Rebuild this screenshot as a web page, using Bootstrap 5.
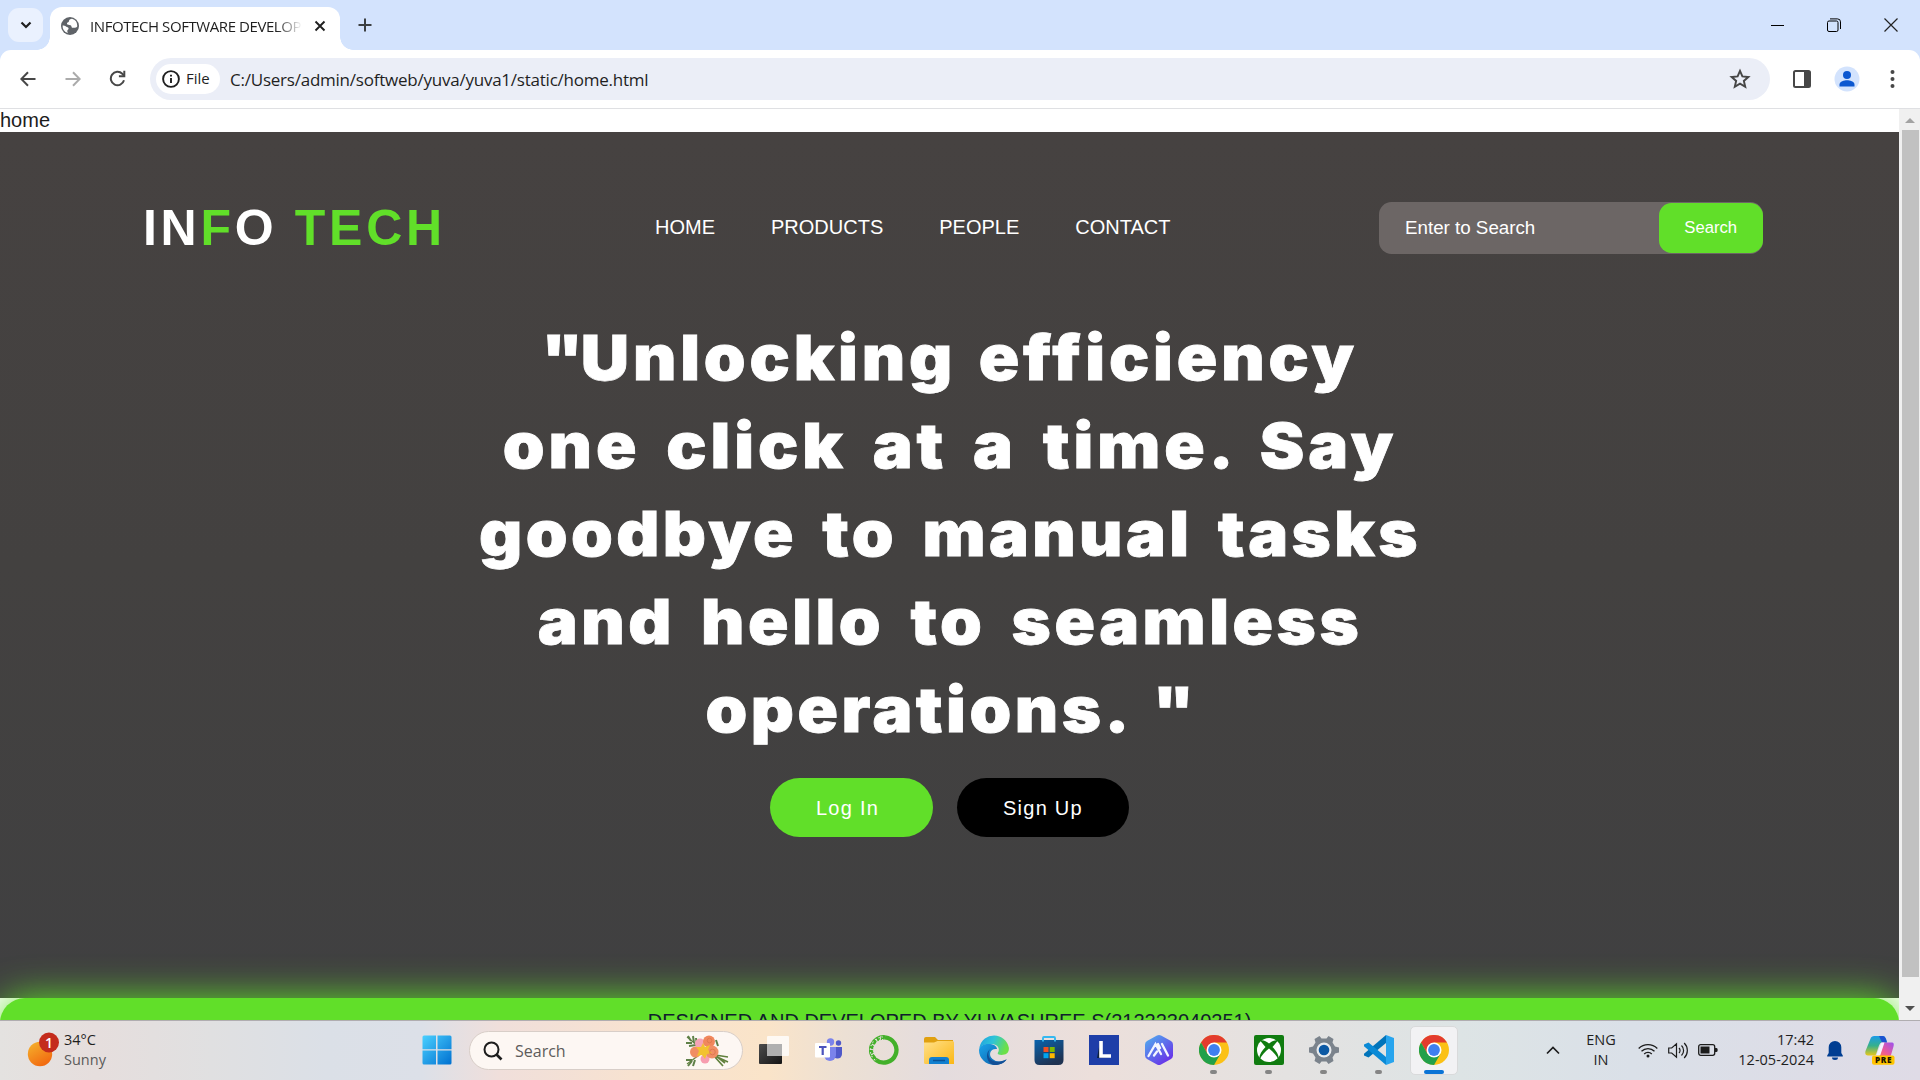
<!DOCTYPE html>
<html lang="en">
<head>
<meta charset="utf-8">
<meta name="viewport" content="width=device-width, initial-scale=1">
<title>INFOTECH SOFTWARE DEVELOPERS</title>
<link href="https://cdn.jsdelivr.net/npm/bootstrap@5.3.0/dist/css/bootstrap.min.css" rel="stylesheet">
<style>
body{width:1920px;height:1080px;overflow:hidden;font-family:"Open Sans","Noto Sans",sans-serif;color:#1f1f1f;background:#fff}
svg{display:block;flex:none}
.nowrap{white-space:nowrap}
/* browser chrome */
.tabstrip{height:50px;background:#d3e3fd;padding-left:8px}
.tab-search{width:35px;height:34px;border-radius:11px;background:#eaf1fe;margin-top:8px}
.tab-active{width:290px;height:43px;margin:7px 0 0 7px;background:#fff;border-radius:12px 12px 0 0;padding:0 14px 6px 11px;position:relative}
.tab-active::before,.tab-active::after{content:"";position:absolute;bottom:0;width:13px;height:13px}
.tab-active::before{left:-13px;background:radial-gradient(circle at 0 0,transparent 12.5px,#fff 13px)}
.tab-active::after{right:-13px;background:radial-gradient(circle at 100% 0,transparent 12.5px,#fff 13px)}
.tab-title{width:212px;margin-left:11px;font-size:15px;line-height:20px;letter-spacing:-.42px;overflow:hidden;-webkit-mask-image:linear-gradient(90deg,#000 88%,transparent);mask-image:linear-gradient(90deg,#000 88%,transparent)}
.plus{margin:18px 0 0 18px}
.winctls{margin-right:1px}
.winctl{width:57px;height:50px}
.toolbar-wrap{height:59px;background:#d3e3fd}
.toolbar{height:59px;background:#fff;border-radius:11px 11px 0 0;border-bottom:1px solid #dfe0e3;padding:0 0 1px 5px}
.tool{width:45px;height:45px}
.omnibox{width:1620px;height:42px;border-radius:21px;background:#ebeef7;padding:0 19px 0 6px;margin-left:10px}
.chip{width:64px;height:30px;border-radius:15px;background:#fff;padding-left:6px;gap:6px;font-size:15px}
.url{font-size:17px;margin-left:10px;letter-spacing:-.23px;padding-top:2px}
.ico-panel,.ico-user{margin-left:23px}.ico-dots{margin-left:29px}
/* page */
.viewport{height:911px;overflow:hidden}
.site{width:1899px;height:911px;overflow:hidden;font-family:"Liberation Sans",Arial,sans-serif;background:#fff}
.site-label{height:23px;font-size:20px;line-height:23px;color:#1c1c1c}
.hero{height:866px;background:linear-gradient(#464241,#434140 50%,#404041);padding-top:70px}
.hero-nav{height:52px;padding-left:143px}
.brand{width:512px;font-size:50px;font-weight:700;letter-spacing:3.7px;line-height:50px;color:#fff}
.brand span{color:#61df29}
.links{gap:56px;width:724px;font-size:20px;color:#fff;padding-bottom:3px}
.searchbox{width:383.5px;height:52px;border-radius:12.5px;background:#6c6665;padding:1px 0}
.searchbox .hint{font-size:18.75px;color:#fff;padding-left:26px;width:280px}
.searchbox .go{width:103.5px;height:50px;border-radius:12.5px;background:#61df29;border:0;color:#fff;font-size:16.67px;padding:0 0 2px}
.quote{padding-top:59px;color:#fff;font-family:Inter,"Liberation Sans",sans-serif;font-weight:900;font-size:62.5px;line-height:88px;margin:0;letter-spacing:3.3px;-webkit-text-stroke:.8px #fff}
.quote div{white-space:nowrap;transform:scaleX(1.07);padding-left:1px}
.quote .ws-1{word-spacing:5px;letter-spacing:3.6px;padding-left:0}
.ws-1 span{letter-spacing:-2px}
.ws-2{word-spacing:8px;letter-spacing:3.7px}
.ws-3{word-spacing:8px;letter-spacing:3.2px}
.ws-4{word-spacing:8.8px}
.quote .ws-5{word-spacing:6px;padding-left:4px}
.cta{gap:24.5px;margin-top:25px;padding-right:.5px}
.pill{height:59px;border-radius:30px;border:0;padding:0 0 0 46px;text-align:left;color:#fff;font-size:20px;letter-spacing:1.25px}
.pill-in{width:162.5px;background:#61df29}.pill-up{width:171.5px;background:#000}
.site-foot{height:60px;background:#61df29;border-radius:25px 25px 0 0;box-shadow:0 0 37px #61df29;font-size:20px;line-height:20px;padding-top:13px;color:#10202c;position:relative}
.scroller{width:21px;background:#f0f0f0;padding:0 1px 0 2px}
.thumb{width:17px;height:847px;background:#c1c1c1}
/* taskbar */
.taskbar{height:60px;border-top:1px solid #b0adb0;background:linear-gradient(90deg,#e4e2e0 0,#e6dedd 5%,#e0e0e1 11%,#dbe0e7 17%,#dce0e8 22%,#f0dfdb 26%,#f7e2d0 33%,#fae4c9 40%,#ece0d4 44%,#e4dcde 49%,#ecdfdb 57%,#e4e2e1 67%,#dde4e5 76%,#dae0e8 85%,#dfdbe6 100%);font-size:14.5px;line-height:20px;padding-bottom:1px}
.weather{width:409px;padding-left:27px;gap:5px}
.muted-txt{color:#5b5a5a}
.tb-search{width:274px;height:39px;border-radius:20px;background:#fdf7f3;border:1px solid #d8cec8;margin:1px 3px 0 5px;padding:0 11px 0 13px;color:#5e5c5b;font-size:16px}
.tb-search span{margin-left:12px}
.app{width:55px;height:58px;position:relative}
.app.run::after{content:"";position:absolute;left:24px;bottom:5px;width:7px;height:4px;border-radius:2px;background:#858585}
.app.on::before{content:"";position:absolute;left:4px;top:5px;width:48px;height:49px;border-radius:5px;background:#f2f2f4;border:1px solid #d9dadb}
.app.on svg{position:relative}
.app.on::after{left:18px;width:20px;background:#0a74d6}
.tray-up{width:40px;margin-left:72px}.tray-lang{width:56px}.tray-i{width:30px}
.tray-time{width:91px}
.tray-bell{width:40px;padding-left:2px}.tray-pre{width:52px}
</style>
<script src="https://cdn.jsdelivr.net/npm/bootstrap@5.3.0/dist/js/bootstrap.bundle.min.js"></script>
</head>
<body>
<svg width="0" height="0" class="position-absolute">
  <defs>
    <linearGradient id="gWin" x1="0" y1="0" x2="1" y2="1"><stop offset="0" stop-color="#4ad0ff"/><stop offset="1" stop-color="#0070d0"/></linearGradient>
    <linearGradient id="gSun" x1="0" y1="0" x2=".6" y2="1"><stop offset="0" stop-color="#f5b52e"/><stop offset="1" stop-color="#f26a10"/></linearGradient>
    <linearGradient id="gFold" x1="0" y1="0" x2="1" y2="1"><stop offset="0" stop-color="#ffe08a"/><stop offset="1" stop-color="#fbb715"/></linearGradient>
    <linearGradient id="gEdge" x1="0" y1="0" x2="1" y2=".3"><stop offset="0" stop-color="#1f9fe0"/><stop offset=".5" stop-color="#2fc4d8"/><stop offset="1" stop-color="#6be048"/></linearGradient>
    <linearGradient id="gEdge2" x1="0" y1="0" x2="1" y2="1"><stop offset="0" stop-color="#1aa4ea"/><stop offset="1" stop-color="#0c59a4"/></linearGradient>
    <linearGradient id="gStore" x1="0" y1="0" x2=".5" y2="1"><stop offset="0" stop-color="#0a63ad"/><stop offset="1" stop-color="#1f3251"/></linearGradient>
    <linearGradient id="gHex" x1="0" y1="0" x2=".8" y2="1"><stop offset="0" stop-color="#4fb4ee"/><stop offset="1" stop-color="#6a2be8"/></linearGradient>
    <linearGradient id="gDark" x1="0" y1="0" x2="1" y2="1"><stop offset="0" stop-color="#4c4c4c"/><stop offset="1" stop-color="#151515"/></linearGradient>
    <linearGradient id="gCopA" x1="0" y1="0" x2="0" y2="1"><stop offset="0" stop-color="#1b9be8"/><stop offset=".5" stop-color="#36b08c"/><stop offset="1" stop-color="#e8c81a"/></linearGradient>
    <linearGradient id="gCopB" x1="1" y1="0" x2="0" y2="1"><stop offset="0" stop-color="#9a52f0"/><stop offset=".6" stop-color="#ef5a94"/><stop offset="1" stop-color="#f77e50"/></linearGradient>
    <symbol id="chrome" viewBox="0 0 30 30">
      <circle cx="15" cy="15" r="15" fill="#fbc116"/>
      <path d="M2 7.500A15 15 0 0 1 28 7.500H15L8.500 18.800z" fill="#e33b2e"/>
      <path d="M2 7.500A15 15 0 0 0 15 30l6.500-11.300L15 22l-6.500-3.300z" fill="#22a04a"/>
      <circle cx="15" cy="15" r="7.500" fill="#fff"/><circle cx="15" cy="15" r="5.900" fill="#3f7ff0"/>
    </symbol>
  </defs>
</svg>
<header>
  <div class="tabstrip d-flex">
    <div class="tab-search d-flex align-items-center justify-content-center"><svg width="12" height="12" viewBox="0 0 12 12"><path d="M1.500 3.500 6 8l4.500-4.500" fill="none" stroke="#1f1f1f" stroke-width="2.200"/></svg></div>
    <div class="tab-active d-flex align-items-center">
      <svg width="18" height="18" viewBox="0 0 18 18"><circle cx="9" cy="9" r="9" fill="#5f6368"/><path d="M11 1.800c-1.500.2-3 .9-3 2.200 0 1.500-1.500 1-2 2.300-.4 1.300 1 1.700 2.400 1.700 1.600 0 2 1 2.200 1.900.3 1.300 2 .8 3.500.8 1 0 2.100-.6 2.200-1.700A7.500 7.500 0 0 0 11 1.800zM1.600 8.600c1.200 0 2.600.3 3.400 1 .9.800 2.600.6 2.600 1.900 0 1.200-1.300 1.400-1.300 2.500 0 .9.700 1.700.6 2.100A7.400 7.400 0 0 1 1.600 8.600z" fill="#fff"/></svg>
      <div class="tab-title nowrap">INFOTECH SOFTWARE DEVELOP</div>
      <svg class="ms-auto" width="12" height="12" viewBox="0 0 12 12"><path d="M1.500 1.500l9 9m0-9l-9 9" stroke="#1f1f1f" stroke-width="1.900"/></svg>
    </div>
    <svg class="plus" width="14" height="14" viewBox="0 0 14 14"><path d="M7 .5v13M.5 7h13" stroke="#3c4043" stroke-width="2"/></svg>
    <div class="winctls d-flex ms-auto">
      <div class="winctl d-flex align-items-center justify-content-center"><svg width="14" height="13" viewBox="0 0 14 13"><path d="M1 6.500h13" stroke="#000"/></svg></div>
      <div class="winctl d-flex align-items-center justify-content-center"><svg width="14" height="14" viewBox="0 0 14 14" fill="none" stroke="#000"><rect x=".5" y="3" width="10.500" height="10.500" rx="1.500"/><path d="M3 .9h7.500a3 3 0 0 1 3 3V11"/></svg></div>
      <div class="winctl d-flex align-items-center justify-content-center"><svg width="14" height="14" viewBox="0 0 14 14"><path d="M.5.5l13 13m0-13l-13 13" stroke="#222" stroke-width="1.200"/></svg></div>
    </div>
  </div>
  <div class="toolbar-wrap">
  <div class="toolbar d-flex align-items-center">
    <div class="tool d-flex align-items-center justify-content-center"><svg width="16" height="16" viewBox="0 0 16 16" fill="none" stroke="#474747" stroke-width="2"><path d="M15.500 8H2M8 1.300 1.300 8 8 14.700"/></svg></div>
    <div class="tool d-flex align-items-center justify-content-center"><svg width="16" height="16" viewBox="0 0 16 16" fill="none" stroke="#ababab" stroke-width="2"><path d="M.5 8H14M8 1.300 14.700 8 8 14.700"/></svg></div>
    <div class="tool d-flex align-items-center justify-content-center"><svg width="17" height="17" viewBox="0 0 17 17"><path d="M15 10.300A6.700 6.700 0 1 1 13.300 3.800L15 5.600" fill="none" stroke="#474747" stroke-width="2"/><path d="M16.300.8v6.400H9.900V5.200h4.400V.8z" fill="#474747"/></svg></div>
    <div class="omnibox d-flex align-items-center">
      <div class="chip d-flex align-items-center"><svg width="18" height="18" viewBox="0 0 18 18"><circle cx="9" cy="9" r="7.900" fill="none" stroke="#1f1f1f" stroke-width="1.900"/><path d="M9 8v5M9 4.700v1.900" stroke="#1f1f1f" stroke-width="1.900"/></svg><span>File</span></div>
      <div class="url nowrap">C:/Users/admin/softweb/yuva/yuva1/static/home.html</div>
      <svg class="ms-auto" width="22" height="22" viewBox="0 0 24 24"><path d="M12 3.200l2.600 6 6.500.6-4.900 4.300 1.500 6.400-5.700-3.400-5.700 3.400 1.500-6.400L2.900 9.800l6.500-.6z" fill="none" stroke="#474747" stroke-width="2.100"/></svg>
    </div>
    <svg class="ico-panel" width="18" height="18" viewBox="0 0 18 18"><rect x="1" y="1" width="16" height="16" rx="1.500" fill="none" stroke="#474747" stroke-width="2"/><path d="M11 1h6v16h-6z" fill="#474747"/></svg>
    <svg class="ico-user" width="26" height="26" viewBox="0 0 26 26"><circle cx="13" cy="13" r="12.500" fill="#d3e3fd"/><circle cx="13" cy="9" r="4" fill="#0b57d0"/><path d="M5.500 20.500v-2c0-3 4.800-4.300 7.500-4.300s7.500 1.300 7.500 4.300v2z" fill="#0b57d0"/></svg>
    <svg class="ico-dots" width="6" height="20" viewBox="0 0 6 20" fill="#474747"><circle cx="3.500" cy="3" r="2"/><circle cx="3.500" cy="10" r="2"/><circle cx="3.500" cy="17" r="2"/></svg>
  </div>
  </div>
</header>
<div class="viewport d-flex">
  <main class="site">
    <div class="site-label">home</div>
    <section class="hero">
      <nav class="hero-nav d-flex align-items-center">
        <div class="brand nowrap">IN<span>F</span>O <span>TECH</span></div>
        <div class="links d-flex"><span>HOME</span><span>PRODUCTS</span><span>PEOPLE</span><span>CONTACT</span></div>
        <div class="searchbox d-flex align-items-center"><div class="hint nowrap">Enter to Search</div><button class="go">Search</button></div>
      </nav>
      <h1 class="quote text-center">
        <div class="ws-1"><span>"</span>Unlocking efficiency</div>
        <div class="ws-2">one click at a time. Say</div>
        <div class="ws-3">goodbye to manual tasks</div>
        <div class="ws-4">and hello to seamless</div>
        <div class="ws-5">operations. "</div>
      </h1>
      <div class="cta d-flex justify-content-center"><button class="pill pill-in">Log In</button><button class="pill pill-up">Sign Up</button></div>
    </section>
    <footer class="site-foot text-center">DESIGNED AND DEVELOPED BY YUVASHREE S(212223040251)</footer>
  </main>
  <aside class="scroller d-flex flex-column align-items-center">
    <svg width="18" height="21" viewBox="0 0 18 21"><path d="M4 14l5-5 5 5z" fill="#a3a3a3"/></svg>
    <div class="thumb"></div>
    <svg class="mt-auto" width="18" height="21" viewBox="0 0 18 21"><path d="M4 7l5 5 5-5z" fill="#505050"/></svg>
  </aside>
</div>
<footer class="taskbar d-flex align-items-center">
  <div class="weather d-flex align-items-center">
    <svg width="32" height="36" viewBox="0 0 32 36"><circle cx="13" cy="22" r="12.200" fill="url(#gSun)"/><circle cx="22" cy="10.500" r="10" fill="#c42b1c"/><text x="22" y="15.500" font-size="14" font-weight="600" fill="#fff" text-anchor="middle">1</text></svg>
    <div><div>34°C</div><div class="muted-txt">Sunny</div></div>
  </div>
  <div class="app d-flex align-items-center justify-content-center"><svg width="30" height="30" viewBox="0 0 30 30" fill="url(#gWin)"><path d="M2 .5h12v13.700H.5V2Q.5.500 2 .5zM15.500.5H28q1.500 0 1.500 1.500v12.200h-14zM.5 15.500H14v14H2Q.5 29.500.5 28zM15.500 15.500h14V28q0 1.500-1.500 1.500H15.500z"/></svg></div>
  <div class="tb-search d-flex align-items-center">
    <svg width="20" height="20" viewBox="0 0 20 20"><circle cx="8.500" cy="8.500" r="7" fill="none" stroke="#1d1d1d" stroke-width="2"/><path d="M13.500 13.500l5 5" stroke="#1d1d1d" stroke-width="2.600"/></svg>
    <span>Search</span>
    <svg class="ms-auto" width="46" height="34" viewBox="0 0 46 34"><path d="M2 3l11 9M2 30l12-9" stroke="#61803d" stroke-width="1.200"/><path d="M1 9l6 0M3 2l3 5M8 2l1 7M4 12l7-1M1 26l6 0M3 32l4-5M8 32l2-6M12 12l-1-8M20 6l6-3M33 12l-2-6" stroke="#5f8048" stroke-width="2"/><path d="M30 21l13 2M30 22l13 6M29 22l9 10M30 21l10 8" stroke="#61803d" stroke-width="1.700"/><circle cx="15" cy="9.500" r="5" fill="#f5a3b5"/><circle cx="24" cy="7.500" r="6" fill="#f1875c"/><circle cx="10.500" cy="18" r="5.500" fill="#f08e63"/><circle cx="20" cy="25" r="4.500" fill="#f79db0"/><circle cx="27" cy="18" r="6.500" fill="#f18f66"/><path d="M18 9l2 4 5-2-2 5 4 3-5 1-2 5-3-4-5 1 2-5-3-4 5 0z" fill="#f2c230"/><circle cx="27.500" cy="18" r="2.800" fill="none" stroke="#e07a50"/><circle cx="24.500" cy="6.500" r="2.300" fill="none" stroke="#e07a50"/></svg>
  </div>
  <div class="app d-flex align-items-center justify-content-center"><svg width="30" height="28" viewBox="0 0 30 28"><rect x="0" y="8" width="23" height="20" rx="1" fill="url(#gDark)"/><rect x="8" y="0" width="22" height="20" rx="1" fill="#fff" opacity=".78"/><rect x="8" y="8" width="15" height="12" fill="#b0b0b0"/></svg></div>
  <div class="app d-flex align-items-center justify-content-center"><svg width="28" height="24" viewBox="0 0 28 24"><circle cx="23.500" cy="5" r="2.700" fill="#5059c9"/><path d="M18 9h9v7a4.500 4.500 0 0 1-9 0z" fill="#5059c9"/><circle cx="15.500" cy="4" r="3.700" fill="#7b83eb"/><path d="M9 9h12v8a6 6 0 0 1-12 0z" fill="#7b83eb"/><rect x="0" y="5" width="15" height="14.500" rx="1" fill="#fff"/><path d="M4 9h7.500M7.700 9v8" stroke="#4b53bc" stroke-width="2.200"/></svg></div>
  <div class="app d-flex align-items-center justify-content-center"><svg width="30" height="30" viewBox="0 0 30 30" fill="none"><path d="M16 2.300A12.700 12.700 0 1 1 7 25" stroke="#43b02a" stroke-width="4.300"/><path d="M7 25A12.700 12.700 0 0 1 16 2.300" stroke="#43b02a" stroke-width="4.300"/><g stroke="#e5dedd" stroke-width="1.100"><path d="M8 22.500A10.500 10.500 0 0 1 14 4.500" stroke-dasharray="1.200 2"/><path d="M6 25A13 13 0 0 1 14 2" stroke-dasharray="1.500 2.300"/><path d="M2 20l5-3M1 14l4 1M3 9l4 3M7 4l2 4M12 1l-1 5"/></g></svg></div>
  <div class="app d-flex align-items-center justify-content-center"><svg width="30" height="27" viewBox="0 0 30 27"><path d="M0 2Q0 0 2 0h9l3 3h15v8H0z" fill="#e0a010"/><path d="M0 5.500h10L13.500 4H28.500Q30 4 30 5.500V27H1.500Q0 27 0 25.500z" fill="url(#gFold)"/><path d="M5 27v-4q0-3 3-3h14q3 0 3 3v4z" fill="#1280d0"/><path d="M9 23.500h12" stroke="#0a5296" stroke-width="1.500"/></svg></div>
  <div class="app d-flex align-items-center justify-content-center"><svg width="30" height="30" viewBox="0 0 30 30"><path d="M.5 12A15 15 0 0 1 29.800 12.500C30.500 18 27 20 22.500 20c-3 0-4.500-1-3.500-2.500 2-3 .5-8-6-8.500C7 8.500 2 10 .5 14z" fill="url(#gEdge)"/><path d="M0 15C1 10 6 8.500 11 9c5 .5 7 3 7 5-7-1-9 6-4.500 10 4 3.500 9.500 3 14 .3C25 28.500 20 30 15 30A15 15 0 0 1 0 15z" fill="url(#gEdge2)"/><path d="M12 13.500c-4 3-3.500 11 3 12.800 5 1.400 9.500 0 12.800-2C25 28.500 20 30 15.500 30 8 29 5 18 12 13.500z" fill="#124f96"/></svg></div>
  <div class="app d-flex align-items-center justify-content-center"><svg width="30" height="30" viewBox="0 0 30 30"><path d="M9 7V3Q9 2 10 2h10q1 0 1 1v4" fill="none" stroke="#35b8f0" stroke-width="1.900"/><path d="M.5 5h29v20Q29.500 30 24.500 30h-19Q.5 30 .5 25z" fill="url(#gStore)"/><path d="M9 5v1.500M21 5v1.500" stroke="#35b8f0" stroke-width="1.900"/><path d="M9.500 12h5v5h-5z" fill="#f25022"/><path d="M15.700 12h5v5h-5z" fill="#7fba00"/><path d="M9.500 18.200h5v5h-5z" fill="#00a4ef"/><path d="M15.700 18.200h5v5h-5z" fill="#ffb900"/></svg></div>
  <div class="app d-flex align-items-center justify-content-center"><svg width="30" height="30" viewBox="0 0 30 30"><path d="M0 0h30v30H0z" fill="#1e3ea8"/><path d="M8 23l3-16v15l11 1z" fill="#0d2140"/><path d="M12 6v15h10" fill="none" stroke="#fff" stroke-width="3.600"/></svg></div>
  <div class="app d-flex align-items-center justify-content-center"><svg width="28" height="30" viewBox="0 0 28 30"><path d="M12 .6q2-1 4 0l10 5.500q2 1.200 2 3.400v11q0 2.200-2 3.400l-10 5.500q-2 1-4 0L2 23.900Q0 22.700 0 20.500v-11Q0 7.300 2 6.100z" fill="url(#gHex)"/><path d="M3.500 21l7-12 5.500 10M9 20.500l3-4M17 9l6 11.500M15 13l-2-4" fill="none" stroke="#f3f6ff" stroke-width="2.300" stroke-linecap="round"/></svg></div>
  <div class="app run d-flex align-items-center justify-content-center"><svg width="30" height="30"><use href="#chrome"/></svg></div>
  <div class="app run d-flex align-items-center justify-content-center"><svg width="30" height="30" viewBox="0 0 30 30"><rect width="30" height="30" rx="2" fill="#107c10"/><circle cx="15" cy="15" r="12" fill="#fff"/><path d="M6 5.500C9 4.500 12.500 6.500 15 8.500c2.500-2 6-4 9-3l-5.500 6.500c4 4 7 9 6 13-2-5-6-8.500-9.500-11.500C11.500 16.500 7.500 20 5.500 25c-1-4 2-9 6-13z" fill="#107c10"/></svg></div>
  <div class="app run d-flex align-items-center justify-content-center"><svg width="30" height="30" viewBox="0 0 30 30"><path d="M10.500 1l2 2.500h5l2-2.500 5 3-1 3.500 2.500 4 4 1v5l-4 1-2.500 4 1 3.500-5 3-2-2.500h-5l-2 2.500-5-3 1-3.500-2.500-4-4-1v-5l4-1 2.500-4-1-3.500z" fill="#7b838c"/><circle cx="15" cy="15" r="7.500" fill="#e8ebee"/><circle cx="15" cy="15" r="5.300" fill="#0c59a4"/></svg></div>
  <div class="app run d-flex align-items-center justify-content-center"><svg width="30" height="30" viewBox="0 0 30 30"><path d="M22 0v8L4.500 22.500 0 20.500v-1.700z" fill="#0074ba"/><path d="M22 30v-8L4.500 7.500 0 9.500v1.700z" fill="#0a8ad6"/><path d="M22 0l8 3v24l-8 3z" fill="#27a5ee"/></svg></div>
  <div class="app run on d-flex align-items-center justify-content-center"><svg width="30" height="30"><use href="#chrome"/></svg></div>
  <div class="tray-up d-flex justify-content-center"><svg width="14" height="9" viewBox="0 0 14 9"><path d="M1 7.500 7 1.500l6 6" fill="none" stroke="#1c1c1c" stroke-width="1.700"/></svg></div>
  <div class="tray-lang text-center"><div>ENG</div><div>IN</div></div>
  <div class="d-flex align-items-center ms-1">
    <div class="tray-i d-flex justify-content-center"><svg width="20" height="15" viewBox="0 0 20 15" fill="none" stroke="#1c1c1c" stroke-width="1.300"><path d="M.7 5.500a13.200 13.200 0 0 1 18.600 0M3.500 8.300a9.200 9.200 0 0 1 13 0M6.200 11a5.400 5.400 0 0 1 7.600 0"/><circle cx="10" cy="13" r="1.500" fill="#1c1c1c" stroke="none"/></svg></div>
    <div class="tray-i d-flex justify-content-center"><svg width="20" height="17" viewBox="0 0 20 17" fill="none" stroke="#1c1c1c" stroke-width="1.200"><path d="M.7 6h3L8.500 1.800v13.400L3.700 11h-3zM11 6a3.500 3.500 0 0 1 0 5M13.500 3.500a7 7 0 0 1 0 10M16.200 1a10.500 10.500 0 0 1 0 15"/></svg></div>
    <div class="tray-i d-flex justify-content-center"><svg width="20" height="12" viewBox="0 0 20 12"><rect x=".7" y=".7" width="16" height="10.600" rx="2" fill="none" stroke="#1c1c1c" stroke-width="1.300"/><rect x="2.500" y="2.500" width="9" height="7" fill="#1c1c1c"/><path d="M17 4h1.500q1.200 0 1.200 2t-1.200 2H17z" fill="#1c1c1c"/></svg></div>
  </div>
  <div class="tray-time text-end nowrap"><div>17:42</div><div>12-05-2024</div></div>
  <div class="tray-bell d-flex justify-content-center"><svg width="16" height="19" viewBox="0 0 16 19" fill="#003e92"><path d="M8 0a6.300 6.300 0 0 1 6.300 6.300V12l1.500 2.500v1H.2v-1L1.700 12V6.300A6.300 6.300 0 0 1 8 0zM5 16.500h6a3 2.500 0 0 1-6 0z"/></svg></div>
  <div class="tray-pre d-flex justify-content-center"><svg width="30" height="29" viewBox="0 0 30 29"><path d="M6 1.500Q7 0 9 0h9q2 0 3 3l1 3.500h-5q-2 0-3 3l-3 9q-.5 1-2 1H3Q-.5 19.500.5 15z" fill="url(#gCopA)"/><path d="M14 0h4q2 0 3 3l1 3.500h-5z" fill="#1b52d0"/><path d="M17 6.500h10q2.500 0 1.500 4L26 19q-.5 2-3 2H12q2-.500 2.500-2.500z" fill="url(#gCopB)"/><path d="M16.500 6.500h3l-4 12q-.6 1.500-2 1.500H11z" fill="#f4f2ff"/><rect x="7" y="19.500" width="22.500" height="9.200" rx="2" fill="#ffc400"/><text x="18.500" y="27.200" font-size="8.200" font-weight="800" letter-spacing=".6" fill="#1c1600" text-anchor="middle">PRE</text></svg></div>
</footer>
</body>
</html>
